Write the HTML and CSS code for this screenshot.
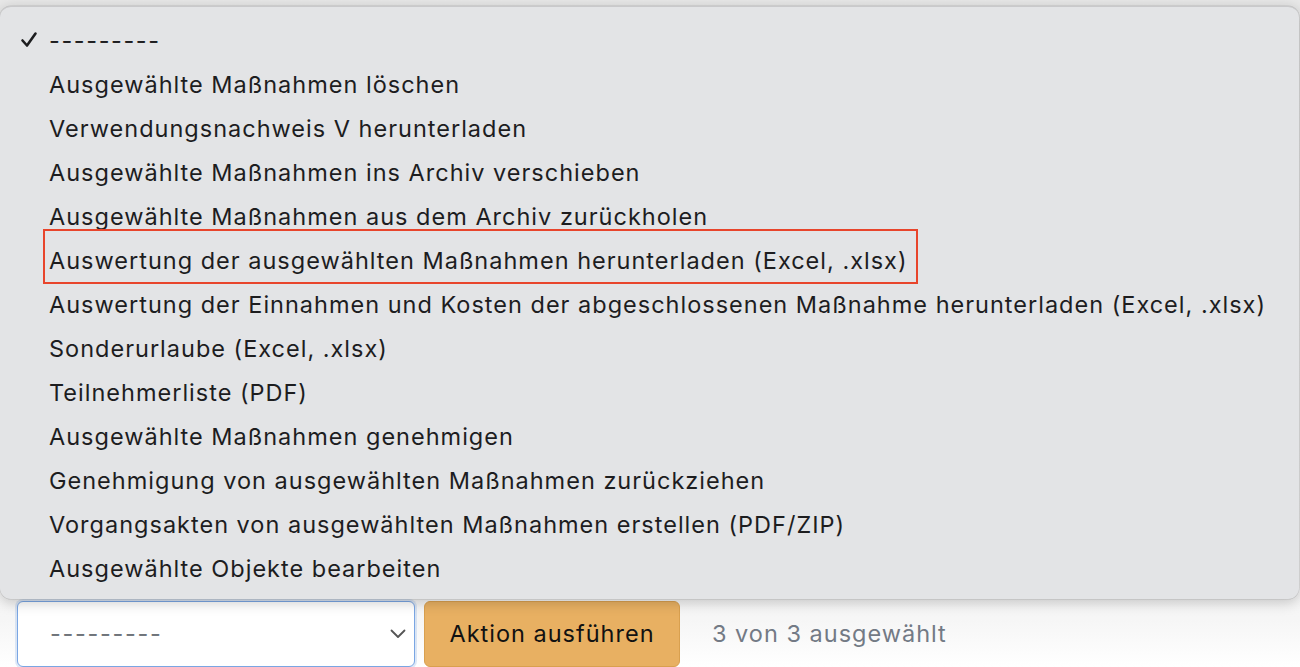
FILE: index.html
```html
<!DOCTYPE html>
<html lang="de">
<head>
<meta charset="utf-8">
<title>Aktion</title>
<link rel="stylesheet" href="styles.css">
</head>
<body>
<div class="page">
  <form class="actions">
    <div class="select-box">
      <span class="select-value">---------</span>
      <svg class="chevron" width="16" height="10" viewBox="0 0 16 10"><path d="M1.5 1.5 L8 8 L14.5 1.5" fill="none" stroke="#555" stroke-width="1.8" stroke-linecap="round" stroke-linejoin="round"/></svg>
    </div>
    <button type="button" class="run-btn">Aktion ausführen</button>
    <span class="counter">3 von 3 ausgewählt</span>
  </form>

  <ul class="menu">
    <li class="item checked"><span class="check">
      <svg width="18" height="18" viewBox="0 0 18 18"><path d="M2.5 9.5 L7 14.5 L15.5 2.5" fill="none" stroke="#1d1d1f" stroke-width="2.6" stroke-linecap="round" stroke-linejoin="round"/></svg>
    </span><span class="label">---------</span></li>
    <li class="item"><span class="label">Ausgewählte Maßnahmen löschen</span></li>
    <li class="item"><span class="label">Verwendungsnachweis V herunterladen</span></li>
    <li class="item"><span class="label">Ausgewählte Maßnahmen ins Archiv verschieben</span></li>
    <li class="item"><span class="label">Ausgewählte Maßnahmen aus dem Archiv zurückholen</span></li>
    <li class="item"><span class="label marked">Auswertung der ausgewählten Maßnahmen herunterladen (Excel, .xlsx)</span></li>
    <li class="item"><span class="label">Auswertung der Einnahmen und Kosten der abgeschlossenen Maßnahme herunterladen (Excel, .xlsx)</span></li>
    <li class="item"><span class="label">Sonderurlaube (Excel, .xlsx)</span></li>
    <li class="item"><span class="label">Teilnehmerliste (PDF)</span></li>
    <li class="item"><span class="label">Ausgewählte Maßnahmen genehmigen</span></li>
    <li class="item"><span class="label">Genehmigung von ausgewählten Maßnahmen zurückziehen</span></li>
    <li class="item"><span class="label">Vorgangsakten von ausgewählten Maßnahmen erstellen (PDF/ZIP)</span></li>
    <li class="item"><span class="label">Ausgewählte Objekte bearbeiten</span></li>
  </ul>
</div>
</body>
</html>
```

FILE: styles.css
```css
* { box-sizing: border-box; }
html, body { margin: 0; padding: 0; }
body {
  background: #ffffff;
  font-family: Inter, "Liberation Sans", Arial, sans-serif;
  color: #1d1d1f;
  width: 1300px;
  height: 667px;
  overflow: hidden;
}
.page {
  position: relative;
  width: 1300px;
  height: 667px;
  background: #f0f0f0;
}
.actions {
  display: flex;
  align-items: center;
  gap: 9px;
  padding: 600px 0 0 17px;
  margin: 0;
  background: linear-gradient(#e8e8e8 0, #f6f6f6 620px, #ffffff 667px);
  height: 667px;
}
.select-box {
  width: 398px;
  height: 66px;
  background: #fff;
  border: 1.5px solid #7aa6e3;
  border-radius: 6px;
  box-shadow: 0 0 0 2px rgba(122,166,227,0.25);
  display: flex;
  align-items: center;
  justify-content: space-between;
  padding: 0 8px 0 32px;
}
.select-value {
  font-size: 23.5px;
  color: #6f747a;
  letter-spacing: 1.7px;
}
.run-btn {
  width: 256px;
  height: 66px;
  background: #e8b062;
  border: 1px solid #d9a04f;
  border-radius: 6px;
  font-family: Inter, "Liberation Sans", Arial, sans-serif;
  font-size: 23.5px;
  letter-spacing: 1px;
  color: #111;
  padding: 0;
}
.counter {
  margin-left: 23px;
  font-size: 23.5px;
  letter-spacing: 1px;
  color: #737a85;
}
.menu {
  position: absolute;
  left: 0;
  top: 6px;
  width: 1299px;
  height: 593px;
  margin: 0;
  padding: 12px 0 0 0;
  list-style: none;
  background: #e3e4e6;
  border-radius: 11px;
  border-top: 1px solid #c9c9cb;
  box-shadow: 0 3px 14px rgba(0,0,0,0.22), 0 0 0 0.5px rgba(0,0,0,0.12);
}
.item {
  display: flex;
  align-items: center;
  height: 44px;
  padding-left: 49px;
  font-size: 23.5px;
  letter-spacing: 1px;
  position: relative;
}
.check {
  position: absolute;
  left: 20px;
  top: 12px;
  width: 18px;
  height: 18px;
}
.check svg { display: block; }
.label { white-space: nowrap; display: inline-block; line-height: 44px; }
.checked .label { letter-spacing: 1.6px; }
.marked { position: relative; }
.marked::before {
  content: "";
  position: absolute;
  left: -6px;
  right: -11px;
  top: -10px;
  bottom: -1px;
  border: 2px solid #e8452c;
}
```
